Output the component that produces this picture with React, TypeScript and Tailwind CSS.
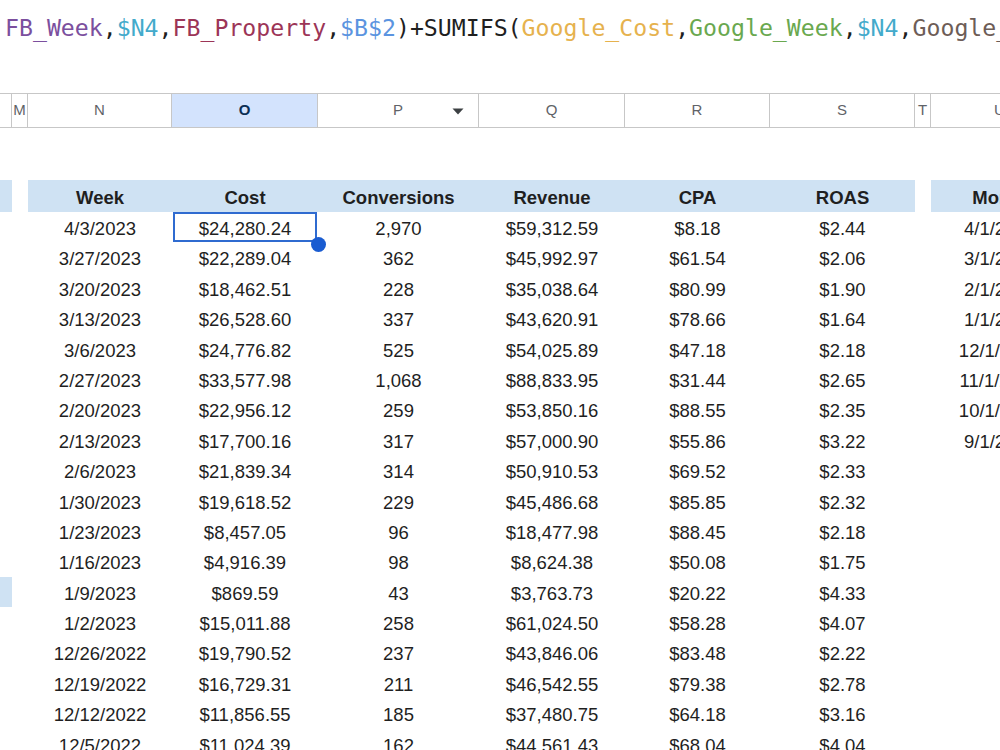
import React from "react";

const COLS = "grid-cols-[12px_16px_144px_146px_161px_146px_145px_145px_16px_138px]";

const rows: string[][] = [
  ["4/3/2023", "$24,280.24", "2,970", "$59,312.59", "$8.18", "$2.44", "4/1/2023"],
  ["3/27/2023", "$22,289.04", "362", "$45,992.97", "$61.54", "$2.06", "3/1/2023"],
  ["3/20/2023", "$18,462.51", "228", "$35,038.64", "$80.99", "$1.90", "2/1/2023"],
  ["3/13/2023", "$26,528.60", "337", "$43,620.91", "$78.66", "$1.64", "1/1/2023"],
  ["3/6/2023", "$24,776.82", "525", "$54,025.89", "$47.18", "$2.18", "12/1/2022"],
  ["2/27/2023", "$33,577.98", "1,068", "$88,833.95", "$31.44", "$2.65", "11/1/2022"],
  ["2/20/2023", "$22,956.12", "259", "$53,850.16", "$88.55", "$2.35", "10/1/2022"],
  ["2/13/2023", "$17,700.16", "317", "$57,000.90", "$55.86", "$3.22", "9/1/2022"],
  ["2/6/2023", "$21,839.34", "314", "$50,910.53", "$69.52", "$2.33", ""],
  ["1/30/2023", "$19,618.52", "229", "$45,486.68", "$85.85", "$2.32", ""],
  ["1/23/2023", "$8,457.05", "96", "$18,477.98", "$88.45", "$2.18", ""],
  ["1/16/2023", "$4,916.39", "98", "$8,624.38", "$50.08", "$1.75", ""],
  ["1/9/2023", "$869.59", "43", "$3,763.73", "$20.22", "$4.33", ""],
  ["1/2/2023", "$15,011.88", "258", "$61,024.50", "$58.28", "$4.07", ""],
  ["12/26/2022", "$19,790.52", "237", "$43,846.06", "$83.48", "$2.22", ""],
  ["12/19/2022", "$16,729.31", "211", "$46,542.55", "$79.38", "$2.78", ""],
  ["12/12/2022", "$11,856.55", "185", "$37,480.75", "$64.18", "$3.16", ""],
  ["12/5/2022", "$11,024.39", "162", "$44,561.43", "$68.04", "$4.04", ""],
];

const letters = ["", "M", "N", "O", "P", "Q", "R", "S", "T", "U"];

function Formula() {
  const parts: [string, string][] = [
    ["FB_Week", "text-[#7b4f9e]"],
    [",", "text-[#1f1f1f]"],
    ["$N4", "text-[#43aacb]"],
    [",", "text-[#1f1f1f]"],
    ["FB_Property", "text-[#9c3557]"],
    [",", "text-[#1f1f1f]"],
    ["$B$2", "text-[#5b94e0]"],
    [")+SUMIFS(", "text-[#1f1f1f]"],
    ["Google_Cost", "text-[#e6b24e]"],
    [",", "text-[#1f1f1f]"],
    ["Google_Week", "text-[#6aa84f]"],
    [",", "text-[#1f1f1f]"],
    ["$N4", "text-[#43aacb]"],
    [",", "text-[#1f1f1f]"],
    ["Google_", "text-[#6d5d57]"],
  ];
  return (
    <div className="h-[93px] pl-[5px] pt-[11px] whitespace-nowrap overflow-hidden font-['DejaVu_Sans_Mono',monospace] text-[23.2px] leading-[34px]">
      {parts.map(([t, c], i) => (
        <span key={i} className={c}>
          {t}
        </span>
      ))}
    </div>
  );
}

function ColumnHeaders() {
  return (
    <div className={`grid ${COLS} h-[35px] border-y border-[#c7c7c7] font-['Liberation_Sans',Arial,sans-serif] text-[15px] text-[#5f6368]`}>
      {letters.map((l, i) => (
        <div
          key={i}
          className={`relative flex items-center justify-center border-r border-[#c7c7c7] ${
            l === "O" ? "bg-[#d3e3fd] font-bold text-[#0b2f55]" : "bg-white"
          }`}
        >
          {l}
          {l === "P" && (
            <svg className="absolute right-[14px] top-[14px]" width="12" height="7" viewBox="0 0 12 7">
              <path d="M0.5 0.5 L11.5 0.5 L6 6.5 Z" fill="#3c4043" />
            </svg>
          )}
        </div>
      ))}
    </div>
  );
}

function HeaderRow() {
  const h = ["Week", "Cost", "Conversions", "Revenue", "CPA", "ROAS"];
  return (
    <div className={`grid ${COLS} h-[32px] font-bold text-[18.5px] text-[#1f1f1f]`}>
      <div className="bg-[#cfe2f3]" />
      <div />
      {h.map((t) => (
        <div key={t} className="bg-[#cfe2f3] flex items-center justify-center pt-[4px]">
          {t}
        </div>
      ))}
      <div />
      <div className="bg-[#cfe2f3] flex items-center justify-center pt-[4px]">Month</div>
    </div>
  );
}

export default function App() {
  return (
    <div className="w-[1000px] h-[750px] overflow-hidden bg-white font-['Liberation_Sans',Arial,sans-serif]">
      <Formula />
      <ColumnHeaders />
      <div className="h-[52px]" />
      <HeaderRow />
      {rows.map((r, ri) => (
        <div key={ri} className={`grid ${COLS} h-[30.4px] text-[18.5px] text-[#1f1f1f]`}>
          <div className={ri === 12 ? "bg-[#cfe2f3]" : ""} />
          <div />
          {r.slice(0, 6).map((v, ci) => (
            <div key={ci} className="relative flex items-center justify-center pt-[3px] whitespace-nowrap">
              {v}
              {ri === 0 && ci === 1 && (
                <>
                  <div className="absolute left-[1px] right-[1px] top-0 bottom-[1px] border-2 border-[#2f6bd0]" />
                  <div className="absolute right-[-8px] bottom-[-9px] w-[15px] h-[15px] rounded-full bg-[#1a5cd1]" />
                </>
              )}
            </div>
          ))}
          <div />
          <div className="flex items-center justify-center pt-[3px] whitespace-nowrap">{r[6]}</div>
        </div>
      ))}
    </div>
  );
}
